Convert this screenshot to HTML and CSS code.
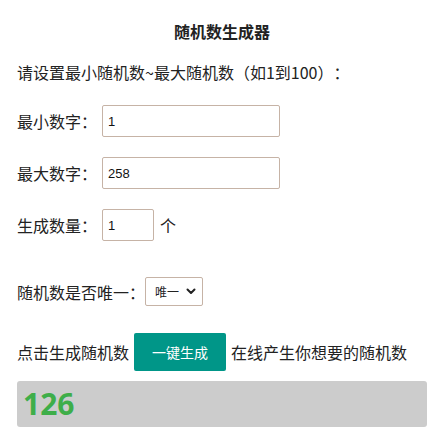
FILE: index.html
```html
<!DOCTYPE html>
<html lang="zh-CN">
<head>
<meta charset="utf-8">
<title>随机数生成器</title>
<link rel="stylesheet" href="styles.css">
</head>
<body>
<div class="page">
  <h1 class="title">随机数生成器</h1>
  <p class="desc">请设置最小随机数~最大随机数（如1到100）：</p>
  <div class="row row-min">
    <span class="label">最小数字：</span>
    <input class="field field-wide" type="text" value="1">
  </div>
  <div class="row row-max">
    <span class="label">最大数字：</span>
    <input class="field field-wide" type="text" value="258">
  </div>
  <div class="row row-count">
    <span class="label">生成数量：</span>
    <input class="field field-narrow" type="text" value="1">
    <span class="unit">个</span>
  </div>
  <div class="row row-unique">
    <span class="label-flush">随机数是否唯一：</span>
    <div class="select">
      <span>唯一</span>
      <svg class="chev" width="10" height="7" viewBox="0 0 10 7"><path d="M1.5 1.5 L5 5 L8.5 1.5" fill="none" stroke="#222" stroke-width="2" stroke-linecap="round" stroke-linejoin="round"/></svg>
    </div>
  </div>
  <div class="row row-action">
    <span>点击生成随机数</span>
    <button class="btn" type="button">一键生成</button>
    <span>在线产生你想要的随机数</span>
  </div>
  <div class="result">126</div>
</div>
</body>
</html>
```
FILE: styles.css
```css
html, body {
  margin: 0;
  padding: 0;
  background: #fff;
}
body {
  font-family: "Noto Sans CJK SC", "Noto Sans", sans-serif;
  font-size: 16px;
  color: #222;
  text-spacing-trim: space-all;
}
.page {
  padding: 20px 6px 0 17px;
}
.title {
  margin: 0;
  font-size: 16px;
  font-weight: bold;
  line-height: 22px;
  text-align: center;
}
.desc {
  margin: 19px 0 0;
  line-height: 22px;
}
.row {
  display: flex;
  align-items: center;
}
.row-min { margin-top: 22px; }
.row-max { margin-top: 20px; }
.row-count { margin-top: 20px; }
.row-unique { margin-top: 36px; }
.row-action { margin-top: 27px; }
.label {
  margin-right: 5px;
}
.field {
  box-sizing: border-box;
  height: 32px;
  border: 1px solid #c6b3a6;
  border-radius: 2px;
  padding: 0 5px;
  font-family: "Liberation Sans", "Noto Sans CJK SC", sans-serif;
  font-size: 13px;
  color: #111;
  outline: none;
}
.field-wide { width: 178px; }
.field-narrow { width: 52px; }
.unit {
  margin-left: 6px;
}
.select {
  box-sizing: border-box;
  width: 58px;
  height: 29px;
  border: 1px solid #c6b3a6;
  border-radius: 2px;
  display: flex;
  align-items: center;
  justify-content: space-between;
  padding: 0 6px 0 9px;
  font-size: 12px;
}
.btn {
  margin: 0 5px;
  height: 38px;
  padding: 0 18px;
  border: none;
  border-radius: 2px;
  background: #009688;
  color: #fff;
  font-family: "Noto Sans CJK SC", sans-serif;
  font-size: 14px;
  line-height: 38px;
}
.result {
  margin-top: 10px;
  height: 46px;
  background: #cccccc;
  border-radius: 3px;
  padding-left: 6px;
  font-family: "Open Sans", "Noto Sans", sans-serif;
  font-weight: bold;
  font-size: 30px;
  line-height: 46px;
  color: #3eae49;
}
```
